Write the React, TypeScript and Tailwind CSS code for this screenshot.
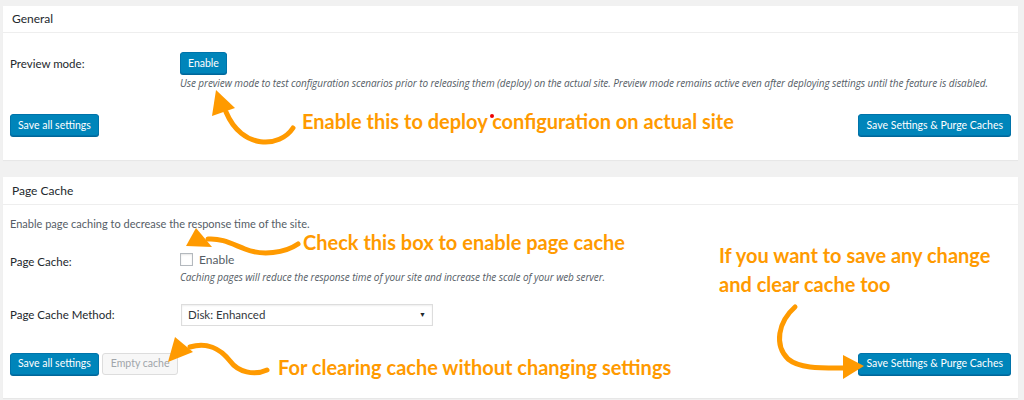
import React from 'react';

const ui = { fontFamily: 'Lato, "Open Sans", "Liberation Sans", sans-serif' };
const italicFont = { fontFamily: '"Open Sans", "Liberation Sans", sans-serif' };
const hand = { fontFamily: 'Lato, "DejaVu Sans", sans-serif' };

function BlueButton({ children }: { children: React.ReactNode }) {
  return (
    <button className="h-[22px] px-[7px] rounded-[3px] bg-[#0085ba] border border-[#0073aa] shadow-[0_1px_0_#006799] text-white text-[10.5px] leading-none">
      {children}
    </button>
  );
}

function Note({ className, children }: { className: string; children: React.ReactNode }) {
  return (
    <div className={`absolute text-[#ff9a00] font-bold text-[20px] leading-none whitespace-nowrap ${className}`} style={hand}>
      {children}
    </div>
  );
}

export default function App() {
  return (
    <div className="relative w-[1024px] h-[400px] overflow-hidden bg-[#f1f1f1] pl-[3px] pr-[6px] pt-[6px] text-[#23282d]" style={ui}>
      {/* General */}
      <section className="h-[154px] bg-white shadow-[0_1px_1px_rgba(0,0,0,0.04)]">
        <div className="h-[27px] border-b border-[#eeeeee] px-[9px] flex items-center text-[12px]">General</div>
        <div className="px-[7px]">
          <div className="flex pt-[16px]">
            <div className="w-[170px] pt-[6px] text-[11.5px]">Preview mode:</div>
            <div>
              <BlueButton>Enable</BlueButton>
              <p className="mt-[2px] text-[10px] italic text-[#555d66] tracking-[-0.08px]" style={italicFont}>
                Use preview mode to test configuration scenarios prior to releasing them (deploy) on the actual site. Preview mode remains active even after deploying settings until the feature is disabled.
              </p>
            </div>
          </div>
          <div className="flex justify-between mt-[23px]">
            <BlueButton>Save all settings</BlueButton>
            <BlueButton>Save Settings &amp; Purge Caches</BlueButton>
          </div>
        </div>
      </section>

      {/* Page Cache */}
      <section className="mt-[17px] h-[221px] bg-white shadow-[0_1px_1px_rgba(0,0,0,0.04)]">
        <div className="h-[28px] border-b border-[#eeeeee] px-[9px] flex items-center text-[12px]">Page Cache</div>
        <div className="px-[7px]">
          <p className="pt-[11px] text-[11px] text-[#555d66]">Enable page caching to decrease the response time of the site.</p>
          <div className="flex mt-[18px]">
            <div className="w-[170px] pt-[2px] text-[11.5px]">Page Cache:</div>
            <div>
              <label className="flex items-center gap-[6px] text-[12px] text-[#555d66]">
                <span className="w-[13px] h-[13px] border border-[#b4b9be] bg-white shadow-[inset_0_1px_2px_rgba(0,0,0,0.1)]" />
                Enable
              </label>
              <p className="mt-[1px] text-[10px] italic text-[#555d66] tracking-[-0.08px]" style={italicFont}>
                Caching pages will reduce the response time of your site and increase the scale of your web server.
              </p>
            </div>
          </div>
          <div className="flex items-center mt-[19px]">
            <div className="w-[171px] text-[11.5px]">Page Cache Method:</div>
            <div className="w-[252px] h-[22px] border border-[#dddddd] bg-white flex items-center justify-between pl-[6px] pr-[6px] text-[11.5px] text-[#32373c] shadow-[inset_0_1px_2px_rgba(0,0,0,0.07)]">
              <span>Disk: Enhanced</span>
              <span className="text-[7px] text-[#23282d]">▼</span>
            </div>
          </div>
          <div className="flex justify-between mt-[27px]">
            <div className="flex gap-[3px]">
              <BlueButton>Save all settings</BlueButton>
              <button className="h-[22px] px-[8px] rounded-[3px] bg-[#f7f7f7] border border-[#ddd] text-[#a0a5aa] text-[10.5px] leading-none">Empty cache</button>
            </div>
            <BlueButton>Save Settings &amp; Purge Caches</BlueButton>
          </div>
        </div>
      </section>

      {/* Annotations */}
      <Note className="left-[302px] top-[111px]">Enable this to deploy configuration on actual site</Note>
      <Note className="left-[303px] top-[232px]">Check this box to enable page cache</Note>
      <Note className="left-[278px] top-[357px]">For clearing cache without changing settings</Note>
      <Note className="left-[719px] top-[245px]">If you want to save any change</Note>
      <Note className="left-[719px] top-[274px]">and clear cache too</Note>
      <svg className="absolute left-0 top-0 pointer-events-none" width="1024" height="400" viewBox="0 0 1024 400">
        <g fill="none" stroke="#ff9a00" strokeWidth="5" strokeLinecap="round">
          <path d="M293 128 C280 148 242 150 226 112" />
          <path d="M298 244 C285 253 262 256 245 249 C232 244 222 238 208 239" />
          <path d="M267 370 C254 376 238 372 230 361 C220 348 206 342 190 347" />
          <path d="M795 307 C778 322 774 345 788 359 C800 369 822 368 846 368" />
        </g>
        <g fill="#ff9a00">
          <polygon points="216,90 212,116 235,108" />
          <polygon points="186,246 196,228 212,247" />
          <polygon points="168,362 175,337 193,352" />
          <polygon points="864,366 843,355 843,379" />
        </g>
        <circle cx="492" cy="116" r="2" fill="#e00" />
      </svg>
    </div>
  );
}
